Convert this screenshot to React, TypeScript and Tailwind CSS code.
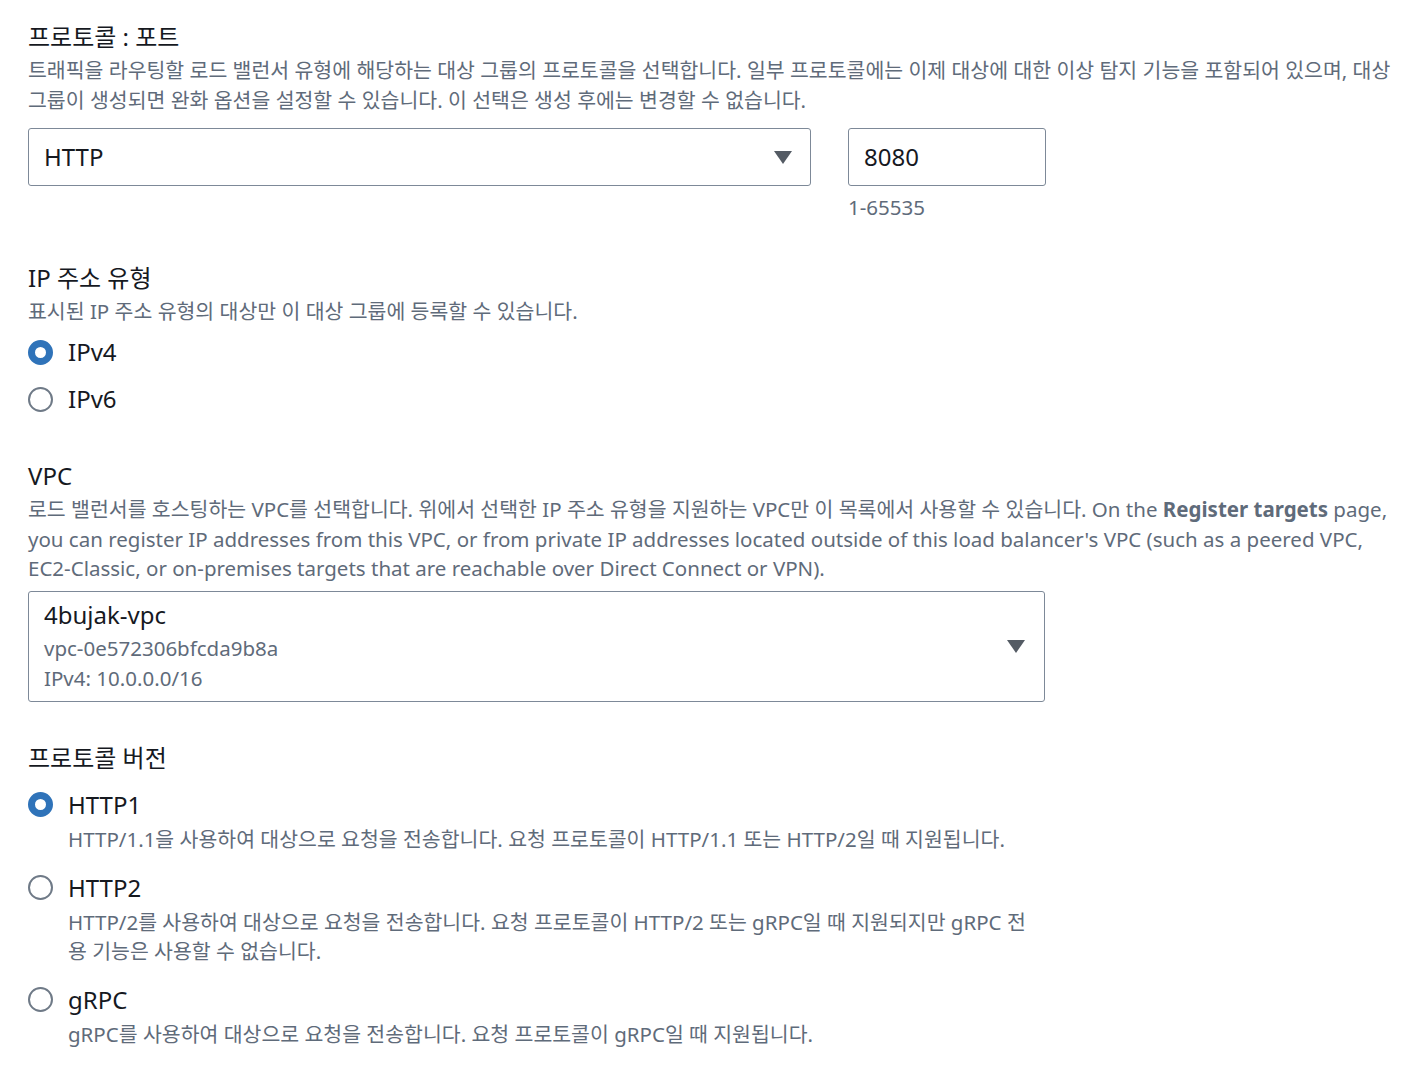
import React from "react";

const FONT = { fontFamily: '"Noto Sans", "Noto Sans CJK KR", sans-serif' };

function Caret() {
  return (
    <svg width="18" height="13" viewBox="0 0 18 13" className="shrink-0">
      <path d="M0 0 H18 L9 13 Z" fill="#545b64" />
    </svg>
  );
}

function Radio({ checked }: { checked?: boolean }) {
  return checked ? (
    <span className="w-[25px] h-[25px] rounded-full border-[7px] border-[#2f73b9] bg-white shrink-0" />
  ) : (
    <span className="w-[25px] h-[25px] rounded-full border-2 border-[#6f7a87] bg-white shrink-0" />
  );
}

function Label({ children }: { children: React.ReactNode }) {
  return <div className="text-[24px] leading-[35px] text-[#16191f]">{children}</div>;
}

function Desc({ children }: { children: React.ReactNode }) {
  return <div className="mt-[2px] text-[20.5px] leading-[29.5px] text-[#5f6b7a]">{children}</div>;
}

function RadioRow({
  label,
  desc,
  checked,
}: {
  label: string;
  desc?: React.ReactNode;
  checked?: boolean;
}) {
  return (
    <div className="flex flex-col">
      <div className="flex items-center gap-[15px] h-[32px]">
        <Radio checked={checked} />
        <span className="text-[24px] text-[#16191f]">{label}</span>
      </div>
      {desc && (
        <div className="pl-[40px] pt-[4px] text-[20.5px] leading-[29px] text-[#5f6b7a]">{desc}</div>
      )}
    </div>
  );
}

export default function App() {
  return (
    <div className="min-h-screen bg-white px-[28px] pt-[19px]" style={FONT}>
      <section className="flex flex-col">
        <Label>프로토콜 : 포트</Label>
        <Desc>
          트래픽을 라우팅할 로드 밸런서 유형에 해당하는 대상 그룹의 프로토콜을 선택합니다. 일부 프로토콜에는 이제 대상에 대한 이상 탐지 기능을 포함되어 있으며, 대상
          <br />
          그룹이 생성되면 완화 옵션을 설정할 수 있습니다. 이 선택은 생성 후에는 변경할 수 없습니다.
        </Desc>
        <div className="flex gap-[37px] mt-[13px]">
          <div className="w-[783px] h-[58px] border border-[#7d8998] rounded-[3px] flex items-center justify-between pl-[15px] pr-[18px]">
            <span className="text-[24px] text-[#16191f]">HTTP</span>
            <Caret />
          </div>
          <div className="flex flex-col">
            <div className="w-[198px] h-[58px] border border-[#7d8998] rounded-[3px] flex items-center px-[15px]">
              <span className="text-[24px] text-[#16191f]">8080</span>
            </div>
            <span className="mt-[6px] text-[20.5px] text-[#5f6b7a]">1-65535</span>
          </div>
        </div>
      </section>

      <section className="flex flex-col mt-[37px]">
        <Label>IP 주소 유형</Label>
        <Desc>표시된 IP 주소 유형의 대상만 이 대상 그룹에 등록할 수 있습니다.</Desc>
        <div className="flex flex-col gap-[15px] mt-[10px]">
          <RadioRow label="IPv4" checked />
          <RadioRow label="IPv6" />
        </div>
      </section>

      <section className="flex flex-col mt-[43px]">
        <Label>VPC</Label>
        <Desc>
          로드 밸런서를 호스팅하는 VPC를 선택합니다. 위에서 선택한 IP 주소 유형을 지원하는 VPC만 이 목록에서 사용할 수 있습니다. On the{" "}
          <span className="font-bold">Register targets</span> page,
          <br />
          you can register IP addresses from this VPC, or from private IP addresses located outside of this load balancer's VPC (such as a peered VPC,
          <br />
          EC2-Classic, or on-premises targets that are reachable over Direct Connect or VPN).
        </Desc>
        <div className="w-[1017px] h-[111px] mt-[7px] border border-[#7d8998] rounded-[3px] flex items-center justify-between pl-[15px] pr-[19px]">
          <div className="flex flex-col">
            <span className="text-[24px] leading-[32px] text-[#16191f]">4bujak-vpc</span>
            <span className="text-[20.5px] leading-[29.5px] text-[#5f6b7a] mt-[3px]">vpc-0e572306bfcda9b8a</span>
            <span className="text-[20.5px] leading-[29.5px] text-[#5f6b7a]">IPv4: 10.0.0.0/16</span>
          </div>
          <Caret />
        </div>
      </section>

      <section className="flex flex-col mt-[38px]">
        <Label>프로토콜 버전</Label>
        <div className="flex flex-col gap-[18px] mt-[14px]">
          <RadioRow
            label="HTTP1"
            checked
            desc="HTTP/1.1을 사용하여 대상으로 요청을 전송합니다. 요청 프로토콜이 HTTP/1.1 또는 HTTP/2일 때 지원됩니다."
          />
          <RadioRow
            label="HTTP2"
            desc={
              <>
                HTTP/2를 사용하여 대상으로 요청을 전송합니다. 요청 프로토콜이 HTTP/2 또는 gRPC일 때 지원되지만 gRPC 전
                <br />
                용 기능은 사용할 수 없습니다.
              </>
            }
          />
          <RadioRow
            label="gRPC"
            desc="gRPC를 사용하여 대상으로 요청을 전송합니다. 요청 프로토콜이 gRPC일 때 지원됩니다."
          />
        </div>
      </section>
    </div>
  );
}
